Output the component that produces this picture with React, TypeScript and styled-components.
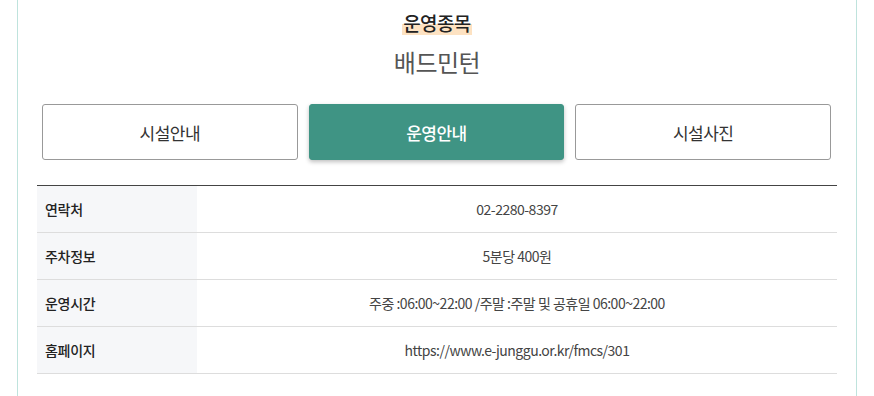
import React from 'react';
import styled, { createGlobalStyle } from 'styled-components';

const GlobalStyle = createGlobalStyle`
  body {
    margin: 0;
    background: #fff;
    font-family: "Noto Sans CJK KR", "Noto Sans", sans-serif;
  }
`;

const Wrapper = styled.div`
  width: 840px;
  margin-left: 17px;
  box-sizing: border-box;
  border-left: 1px solid #bfe3dd;
  border-right: 1px solid #bfe3dd;
  padding: 9px 19px 22px;
  min-height: 396px;
`;

const Header = styled.div`
  display: flex;
  flex-direction: column;
  align-items: center;
`;

const Label = styled.span`
  font-size: 19px;
  font-weight: 500;
  line-height: 27px;
  color: #222;
  letter-spacing: -0.6px;
  padding: 0 1px;
  background: linear-gradient(transparent 55%, #fde2c2 55%, #fde2c2 95%, transparent 95%);
`;

const Sport = styled.h2`
  margin: 10px 0 0;
  font-size: 24px;
  font-weight: 400;
  line-height: 32px;
  color: #555;
  letter-spacing: -0.5px;
`;

const Tabs = styled.div`
  display: grid;
  grid-template-columns: repeat(3, 1fr);
  gap: 11px;
  width: 789px;
  margin: 26px 0 0 5px;
`;

const Tab = styled.button<{ $active?: boolean }>`
  height: 56px;
  border-radius: 3px;
  border: 1px solid ${(p) => (p.$active ? '#3f9484' : '#999')};
  background: ${(p) => (p.$active ? '#3f9484' : '#fff')};
  color: ${(p) => (p.$active ? '#fff' : '#333')};
  box-shadow: ${(p) => (p.$active ? '0 2px 4px rgba(0, 0, 0, 0.25)' : 'none')};
  font-family: inherit;
  font-size: 17px;
  font-weight: ${(p) => (p.$active ? 500 : 400)};
  letter-spacing: -0.5px;
  cursor: pointer;
`;

const Table = styled.table`
  width: 800px;
  margin-top: 25px;
  border-collapse: collapse;
  border-top: 1px solid #444;
`;

const Row = styled.tr`
  border-bottom: 1px solid #ddd;
`;

const Th = styled.th`
  width: 160px;
  height: 46px;
  padding: 0 0 0 8px;
  box-sizing: border-box;
  background: #f6f7f9;
  text-align: left;
  font-size: 14px;
  font-weight: 500;
  color: #222;
  letter-spacing: -0.3px;
`;

const Td = styled.td`
  height: 46px;
  padding: 0;
  text-align: center;
  font-size: 14px;
  color: #444;
  letter-spacing: -0.5px;
`;

const rows = [
  { label: '연락처', value: '02-2280-8397' },
  { label: '주차정보', value: '5분당 400원' },
  { label: '운영시간', value: '주중 :06:00~22:00 /주말 :주말 및 공휴일 06:00~22:00' },
  { label: '홈페이지', value: 'https://www.e-junggu.or.kr/fmcs/301' },
];

export default function App() {
  return (
    <>
      <GlobalStyle />
      <Wrapper>
        <Header>
          <Label>운영종목</Label>
          <Sport>배드민턴</Sport>
        </Header>
        <Tabs>
          <Tab>시설안내</Tab>
          <Tab $active>운영안내</Tab>
          <Tab>시설사진</Tab>
        </Tabs>
        <Table>
          <tbody>
            {rows.map((r) => (
              <Row key={r.label}>
                <Th>{r.label}</Th>
                <Td>{r.value}</Td>
              </Row>
            ))}
          </tbody>
        </Table>
      </Wrapper>
    </>
  );
}
